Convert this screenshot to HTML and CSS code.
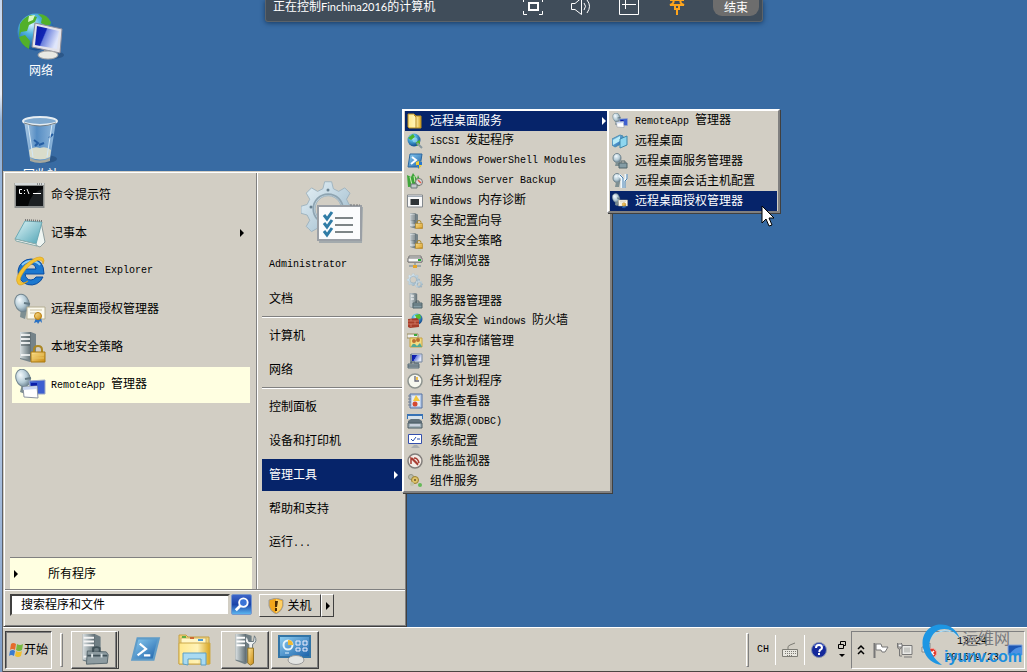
FILE: index.html
```html
<!DOCTYPE html>
<html lang="zh-CN">
<head>
<meta charset="utf-8">
<title>远程桌面</title>
<link rel="stylesheet" href="styles.css">
</head>
<body>
<svg class="sprite" aria-hidden="true">
  <defs>
    <radialGradient id="gGlobe" cx=".38" cy=".3" r=".75"><stop offset="0" stop-color="#d5f3ff"/><stop offset=".35" stop-color="#4fb3e0"/><stop offset="1" stop-color="#0d3f86"/></radialGradient>
    <linearGradient id="gScreen" x1="0" y1="0" x2="1" y2=".4"><stop offset="0" stop-color="#0a18a8"/><stop offset=".45" stop-color="#1226b4"/><stop offset=".5" stop-color="#6b80dd"/><stop offset="1" stop-color="#dfe6fb"/></linearGradient>
    <radialGradient id="gDish" cx=".4" cy=".3" r=".7"><stop offset="0" stop-color="#f4fafd"/><stop offset=".6" stop-color="#b5cbd6"/><stop offset="1" stop-color="#6d8391"/></radialGradient>
    <linearGradient id="gSteel" x1="0" y1="0" x2="1" y2="0"><stop offset="0" stop-color="#d9dfe1"/><stop offset=".5" stop-color="#9aa6aa"/><stop offset="1" stop-color="#5f6c72"/></linearGradient>
    <linearGradient id="gGold" x1="0" y1="0" x2="1" y2="1"><stop offset="0" stop-color="#ffe596"/><stop offset="1" stop-color="#c98a12"/></linearGradient>
    <linearGradient id="gBlue" x1="0" y1="0" x2="1" y2="1"><stop offset="0" stop-color="#8fd0f3"/><stop offset="1" stop-color="#1a5fa8"/></linearGradient>
    <linearGradient id="gPad" x1="0" y1="0" x2="1" y2="1"><stop offset="0" stop-color="#dff5f7"/><stop offset="1" stop-color="#4fa3b5"/></linearGradient>
    <linearGradient id="gGear" x1="0" y1="0" x2="1" y2="1"><stop offset="0" stop-color="#e8f3f8"/><stop offset=".6" stop-color="#b3cbd9"/><stop offset="1" stop-color="#8299a8"/></linearGradient>
    <linearGradient id="gFolder" x1="0" y1="0" x2="1" y2="0"><stop offset="0" stop-color="#ffe88c"/><stop offset=".6" stop-color="#fff3b8"/><stop offset="1" stop-color="#d9a520"/></linearGradient>
    <linearGradient id="gGlass" x1="0" y1="0" x2="1" y2="0"><stop offset="0" stop-color="#c3dcf0"/><stop offset=".4" stop-color="#5b93c9"/><stop offset="1" stop-color="#a5c9e8"/></linearGradient>
  </defs>

  <symbol id="i-network" viewBox="0 0 48 48">
    <ellipse cx="34" cy="43" rx="13" ry="4" fill="#1d4470" opacity=".5"/>
    <circle cx="19" cy="20" r="18.500" fill="url(#gGlobe)"/>
    <path d="M3 12Q7 5 14 3l6 2-2 5-6 3-2 6-6 1-2 5zM21 2q10 0 13 9l-4 3-6-3 1-5zM2 25l6-2 5 6-1 8Q4 33 2 25zM27 3l7 7-1 3-7-2z" fill="#52b02a"/>
    <path d="M12 4l6-1-2 5-5 2z" fill="#d9f8c5"/>
    <path d="M18 11l27 6-2 24-28-6z" fill="#e3e3ea" stroke="#8d8d99"/>
    <path d="M20 14l22 5-2 18-22-4z" fill="url(#gScreen)"/>
    <path d="M27 38l6 1v3l-7-1z" fill="#9d9da2"/>
    <ellipse cx="31" cy="43" rx="10" ry="4" fill="#e9e9e4" stroke="#a9a9a9"/>
  </symbol>
  <symbol id="i-bin" viewBox="0 0 40 48">
    <ellipse cx="24" cy="43" rx="12" ry="4" fill="#1d4470" opacity=".5"/>
    <path d="M3 5l6 38q10 5 20 0l6-38z" fill="url(#gGlass)" opacity=".85"/>
    <path d="M8 34l1 7q10 5 20 0l1-7q-5-4-11-2-6-2-11 2z" fill="#d9dccb"/>
    <path d="M9 42q10 5 20 0v3q-10 4-20 0z" fill="#a5a89e"/>
    <path d="M13 24l4 3-3 3M18 29l5-2M28 22l4-4" stroke="#255ea3" stroke-width="2" fill="none"/>
    <path d="M7 8l5 33M31 8l-5 33" stroke="#d3e8f7" stroke-width="1"/>
    <ellipse cx="19" cy="5" rx="17" ry="4" fill="#7fa9cf" stroke="#e6edf2" stroke-width="2"/>
    <path d="M3 7q16 6 32 0" fill="none" stroke="#737f87"/>
  </symbol>
  <symbol id="i-cmd" viewBox="0 0 32 32">
    <rect x=".5" y="4" width="30" height="25" fill="#8a8d8c"/><path d="M1 4h29v2H1z" fill="#d5d9da"/><path d="M23 5h1m1 0h1m1 0h1" stroke="#444"/>
    <path d="M2 7h27v20H2z" fill="#050607"/><path d="M14 27Q17 13 29 10v17z" fill="#1c2023"/>
    <path d="M8 10.500H5.500v4H8M10 11.500h1m-1 3h1M13 10l2 5M19 14.500h8" fill="none" stroke="#fff" stroke-width="1"/>
  </symbol>
  <symbol id="i-notepad" viewBox="0 0 32 32">
    <path d="M27 5l4 20-5 5-5-2z" fill="#eff5f2" stroke="#8e9e9f"/><path d="M11 4l17 1-6 22L1 22z" fill="url(#gPad)" stroke="#6caab5"/>
    <path d="M1 22l21 5 1 2-21-5z" fill="#f4f7f5" stroke="#8aa"/><path d="M11 3l17 1" stroke="#777" stroke-width="2" stroke-dasharray="1 1"/>
  </symbol>
  <symbol id="i-ie" viewBox="0 0 32 32">
    <path fill-rule="evenodd" d="M17 4a13 13 0 1 0 12 18h-7q-2 3-5 3-5 0-6-6h19Q30 4 17 4zM11 14q1-5 6-5 4 0 5 5z" fill="#1c78cf" stroke="#0b4da0"/>
    <path d="M8 10q4-4 9-4 6 0 9 4" fill="none" stroke="#8ccbf5" stroke-width="2"/>
    <path d="M4 29Q-1 23 11 10 24-1 29 3q2 2 0 6 0-4-3-4-5 0-14 9-8 10-5 13 2 2 7-1Q7 32 4 29z" fill="#f3c334" stroke="#d99c16" stroke-width=".6"/>
  </symbol>
  <symbol id="i-cert" viewBox="0 0 32 32">
    <path d="M7 16l-1 8 5 2 2-9z" fill="#7e8f92"/><ellipse cx="8" cy="10" rx="7" ry="9" transform="rotate(-18 8 10)" fill="url(#gDish)" stroke="#71858f"/>
    <path d="M10 10l6 1" stroke="#647984" stroke-width="2"/><path d="M13 14h18v12H13z" fill="#fbf9ed" stroke="#b5ae92"/><path d="M16 17h12M16 20h9" stroke="#c9c1a5"/>
    <path d="M22 25l-2 5 3-1 1 2 2-3 2 2-1-6z" fill="#2870c4"/><circle cx="24" cy="23" r="3.500" fill="url(#gGold)" stroke="#bb8013"/>
  </symbol>
  <symbol id="i-lock" viewBox="0 0 32 32">
    <path d="M6 1h11l5 2v24l-6 4-10-3z" fill="#758389"/><path d="M6 1h11v28l-11-2z" fill="url(#gSteel)"/><path d="M7 4h9M7 8h9M7 12h9M7 24h9" stroke="#fff" stroke-width="1.500"/><path d="M7 6h9M7 10h9M7 14h9" stroke="#4b565b"/>
    <path d="M20 21v-2q0-4 4-4t4 4v3" fill="none" stroke="#ab8623" stroke-width="2"/><path d="M17 21h14v10H17z" fill="url(#gGold)" stroke="#a97a12"/><path d="M18 24h12m-12 3h12" stroke="#eac760"/>
  </symbol>
  <symbol id="i-remote" viewBox="0 0 32 32">
    <path d="M8 15l-2 8 5 2 2-8z" fill="#7e8f92"/><ellipse cx="9" cy="9" rx="7" ry="9" transform="rotate(-20 9 9)" fill="url(#gDish)" stroke="#71858f"/><path d="M11 10l6-1" stroke="#647984" stroke-width="2"/>
    <path d="M15 12l16-1v14H17z" fill="#3d5fd0" stroke="#9daac8"/><path d="M17 14h6v5h-6z" fill="#0a1da8"/><path d="M9 18l14-1 1 12-14-1z" fill="#fff" stroke="#8b93a0"/><path d="M9 18l14-1v3l-14 1z" fill="#c7d5ef"/>
  </symbol>

  <symbol id="gear" viewBox="0 0 64 64"><path fill-rule="evenodd" d="M27 2h8l2 8 6 3 7-4 6 6-4 7 3 6 8 2v8l-8 2-3 6 4 7-6 6-7-4-6 3-2 7h-8l-2-7-6-3-7 4-6-6 4-7-3-6-7-2v-8l7-2 3-6-4-7 6-6 7 4 6-3zM31 18a15 15 0 1 0 .1 0z" fill="url(#gGear)" stroke="#9ab0bd"/><circle cx="31" cy="33" r="17" fill="none" stroke="#8ea4b1" stroke-width="2"/></symbol>
  <symbol id="i-admin" viewBox="0 0 64 72">
    <use href="#gear" x="1" y="2" width="56" height="60"/><circle cx="28" cy="14" r="1.500" fill="#68808f"/><circle cx="11" cy="31" r="1.500" fill="#68808f"/>
    <path d="M20 30l43 1-1 36H19z" fill="#83939f" opacity=".6"/><path d="M18 30h43v34H18z" fill="#fbfcfd" stroke="#9a9fa5" stroke-width="2"/><path d="M50 29h10" stroke="#777" stroke-dasharray="2 1"/>
    <path d="M24 39l3 4 5-7M24 47l3 4 5-7M24 55l3 4 5-7" fill="none" stroke="#2f7ca6" stroke-width="3"/><path d="M35 42h18M35 49h18M35 56h18" stroke="#7d8587" stroke-width="2"/>
  </symbol>

  <symbol id="s-folder" viewBox="0 0 16 16"><path d="M1 1h6l2 2h5v12H2L1 14z" fill="url(#gFolder)" stroke="#b98e20"/><path d="M7 2l2 2v11" stroke="#b98b1f" fill="none"/></symbol>
  <symbol id="s-iscsi" viewBox="0 0 16 16"><circle cx="7" cy="7" r="6.500" fill="url(#gGlobe)"/><path d="M1 5l5-4 2 3-4 3zM9 9l4-2v4l-3 2z" fill="#4ab52a"/><circle cx="8" cy="7" r="2.500" fill="#9bdcf5" opacity=".7"/><path d="M10 10l5 5" stroke="#8a98a0" stroke-width="2"/></symbol>
  <symbol id="s-ps" viewBox="0 0 16 16"><path d="M3 1h12l-2 13H1z" fill="url(#gBlue)" stroke="#2b669f"/><path d="M5 4l4 3-5 4" fill="none" stroke="#fff" stroke-width="2"/><path d="M9 9l3-1 3 1v3l-3 4-3-4z" fill="#f3cf38"/><path d="M12 8l3 1v3h-3zM9 12h3v4z" fill="#2877cf"/></symbol>
  <symbol id="s-backup" viewBox="0 0 16 16"><path d="M1 14L0 2l4 2 2-4 4 6 1-4 2 5v6z" fill="#3fa53a"/><path d="M3 4l2 8M7 3l1 6" stroke="#cff0bb"/><circle cx="12" cy="9" r="3.500" fill="#ddd" stroke="#777"/><path d="M11 7l3 3" stroke="#e4604a" stroke-width="1.500"/><path d="M4 11h6v4H4z" fill="#c4cacb" stroke="#6c787a"/></symbol>
  <symbol id="s-mem" viewBox="0 0 16 16"><path d="M.5 2h15v12H.5z" fill="#f9f9f9" stroke="#83888d"/><path d="M1 3h14v1H1z" fill="#a4afb9"/><path d="M4 6h8v6H4z" fill="#2e3538"/><path d="M3 7h10M3 9h10M3 11h10" stroke="#333" stroke-dasharray="1 1"/></symbol>
  <symbol id="s-storage" viewBox="0 0 16 16"><path d="M2 3h12l1 6H1z" fill="#ddd" stroke="#777"/><path d="M1 5h14v4H1z" fill="#f7f7f7" stroke="#777"/><path d="M11 7h3" stroke="#26a533" stroke-width="2"/><path d="M2 13h12M8 10v3" stroke="#6b8190"/><path d="M6 12h4v3H6z" fill="#e3a52c"/></symbol>
  <symbol id="s-gears" viewBox="0 0 16 16"><use href="#gear" x="0" y="0" width="13" height="13"/><use href="#gear" x="8" y="7" width="8" height="8"/></symbol>
  <symbol id="s-server" viewBox="0 0 16 16"><path d="M3 0h5l2 1v12l-3 2-4-1z" fill="url(#gSteel)" stroke="#7e8b90" stroke-width=".5"/><path d="M4 3h3M4 6h3" stroke="#fff"/><path d="M6 10h9v5H6z" fill="#849ca5" stroke="#51646b"/><path d="M9 10V8h3v2M6 12h9" fill="none" stroke="#52656b"/></symbol>
  <symbol id="s-wall" viewBox="0 0 16 16"><circle cx="10" cy="6" r="5.500" fill="url(#gGlobe)"/><path d="M8 2l5-1 1 4-4 2z" fill="#59bd2c"/><path d="M1 6l9-1 2 2v7l-9 1-2-1z" fill="#a63d2a"/><path d="M1 8h11M1 11h11M4 6v2m4 0v3m-4 0v3" stroke="#dd8b73" stroke-width=".7"/></symbol>
  <symbol id="s-share" viewBox="0 0 16 16"><path d="M0 1h11v4H0z" fill="#eee" stroke="#9a8d60"/><path d="M3 5h12v9H3z" fill="#f4dc82" stroke="#c7a341"/><path d="M7 2h3" stroke="#3aa83d" stroke-width="2"/><circle cx="7" cy="8" r="2" fill="#b97132"/><circle cx="11" cy="7" r="2" fill="#b97132"/><path d="M4 14q2-6 6-1l3-3 2 4z" fill="#51a896"/></symbol>
  <symbol id="s-computer" viewBox="0 0 16 16"><path d="M4 1h11v8H4z" fill="#d7e2ee" stroke="#7786a1"/><path d="M5 2h9v6H5z" fill="url(#gScreen)"/><path d="M9 9h3v2H9zM3 1h2v9H3z" fill="#788692"/><path d="M1 11h11v4H1z" fill="#a0adb4" stroke="#596c77"/><path d="M4 11V9h4v2M1 13h11" fill="none" stroke="#4e5e68"/></symbol>
  <symbol id="s-clock" viewBox="0 0 16 16"><circle cx="8" cy="8" r="7" fill="#f7f8ef" stroke="#8d938f" stroke-width="1.500"/><path d="M8 3v5h4" fill="none" stroke="#667" stroke-width="1.300"/><path d="M9 4h2v3H9z" fill="#efbf4c"/></symbol>
  <symbol id="s-event" viewBox="0 0 16 16"><path d="M3 1h12v14H3z" fill="#b7cbe8" stroke="#5571a0"/><path d="M5 3h8v10H5z" fill="#e5ebf3"/><path d="M1 3h3M1 6h3M1 9h3M1 12h3" stroke="#6e7d91"/><path d="M9 2l4 6H6z" fill="#f4c83b"/><circle cx="8" cy="11" r="2.500" fill="#d54831"/></symbol>
  <symbol id="s-odbc" viewBox="0 0 16 16"><path d="M0 1h16v5H0z" fill="#3772b5"/><path d="M1 3h14v3H1z" fill="#d7e2eb"/><path d="M1 8l3-2h8l3 2v2H1z" fill="#61717b"/><path d="M1 10h14v5H1z" fill="#a4b3ba" stroke="#4a5b65"/><path d="M3 12h10" stroke="#eef"/></symbol>
  <symbol id="s-config" viewBox="0 0 16 16"><path d="M1.500 1.500h13v9h-13z" fill="#fff" stroke="#344fac"/><path d="M4 6l2 2 3-4M10 6h3" fill="none" stroke="#254dab"/><path d="M7 12h3l3 3H4z" fill="#aaaeb1"/></symbol>
  <symbol id="s-perf" viewBox="0 0 16 16"><circle cx="8" cy="8" r="7" fill="#f3ebe5" stroke="#827e7b" stroke-width="1.500"/><path d="M4 11V5l7 7M7 5q4 0 5 5M5 5l6 6" fill="none" stroke="#a83c32" stroke-width="1.500"/></symbol>
  <symbol id="s-comp" viewBox="0 0 16 16"><circle cx="4" cy="4" r="2.500" fill="#babdb0" stroke="#929384"/><circle cx="8" cy="7" r="3.500" fill="#e0c36a" stroke="#998131"/><circle cx="5" cy="11" r="2" fill="#c1c4ac"/><circle cx="13" cy="12" r="2" fill="#64b957"/><circle cx="8" cy="7" r="1" fill="#64542b"/></symbol>
  <symbol id="s-rdp" viewBox="0 0 16 16"><path d="M0 6l8-4 3 1v7l-8 4-3-2z" fill="url(#gBlue)" stroke="#4d8eb0"/><path d="M1 7l7-4v5l-7 4z" fill="#b9ecf8"/><path d="M8 6l7-3v9l-7 3z" fill="#8ed6ef" stroke="#3f87a9"/></symbol>
  <symbol id="s-rdsvc" viewBox="0 0 16 16"><ellipse cx="5" cy="5" rx="4" ry="4.500" fill="url(#gDish)" stroke="#71858f"/><path d="M4 9l-1 4h4l1-4z" fill="#7e8f92"/><path d="M7 10h8v5H7z" fill="#849ca5" stroke="#51646b"/><path d="M9 10V8h4v2" fill="none" stroke="#52656b"/></symbol>
  <symbol id="s-rdcfg" viewBox="0 0 16 16"><ellipse cx="5" cy="5" rx="4" ry="4.500" fill="url(#gDish)" stroke="#71858f"/><path d="M4 9l-1 5h4l1-5z" fill="#7e8f92"/><path d="M7 2l3 3v10M14 1v5l-2 2v7" stroke="#edf7fd" stroke-width="3" fill="none"/><path d="M8 2l3 3v10M15 1v5l-2 2v7" stroke="#487caa" fill="none"/></symbol>

  <symbol id="t-flag" viewBox="0 0 16 16"><path d="M2 8l1-6q2-2 5 0L7 8Q4 6 2 8z" fill="#e66b2b"/><path d="M9 2q3 2 6 0l-1 6q-3 2-6 0z" fill="#76b83d"/><path d="M2 9q3-2 5 0l-1 5q-3-2-5 0z" fill="#397bd0"/><path d="M8 9q3 2 6 0l-1 5q-3 2-6 0z" fill="#f0bf2f"/></symbol>
  <symbol id="t-server" viewBox="0 0 32 36"><path d="M4 1h13l6 3v24l-7 5-12-4z" fill="#6f7e84"/><path d="M4 1h13v30L4 28z" fill="url(#gSteel)"/><path d="M5 5h11M5 9h11M5 13h11M5 25h11" stroke="#f4f4f4" stroke-width="2"/><path d="M9 19l20 1 2 3-1 9-22 1z" fill="#8d9ba0" stroke="#56666c"/><path d="M15 20v-4q4-2 7 0v4M9 24h21" fill="none" stroke="#405158" stroke-width="2"/><path d="M14 22v4m10-4v4" stroke="#dce3e5" stroke-width="2"/></symbol>
  <symbol id="t-ps" viewBox="0 0 32 28"><path d="M9 3h20l-5 20H4z" fill="url(#gBlue)" stroke="#5f9cc8" stroke-width="2"/><path d="M11 8l6 5-8 6M15 19h6" fill="none" stroke="#fff" stroke-width="2"/></symbol>
  <symbol id="t-folder" viewBox="0 0 34 34"><path d="M1 2h7l2 2h21v27H1z" fill="#f0d376" stroke="#c5a044"/><path d="M3 5h25v11H3z" fill="#fff6c7" stroke="#d1b566"/><path d="M4 4h4" stroke="#60ae46" stroke-width="2"/><path d="M12 5h4" stroke="#cf6a34" stroke-width="2"/><path d="M20 7h5" stroke="#4d9bd6" stroke-width="2"/><path d="M1 10h31v21H1z" fill="url(#gFolder)" stroke="#cca94b"/><path d="M5 31V20h23v12h-5v-6H10v6z" fill="#a9daf1" stroke="#5c9fc5"/></symbol>
  <symbol id="t-tools" viewBox="0 0 32 36"><path d="M6 1h11l6 2v26l-7 4-10-4z" fill="#6f7e84"/><path d="M6 1h11v30L6 28z" fill="url(#gSteel)"/><path d="M7 5h9M7 9h9M7 13h9" stroke="#fff" stroke-width="2"/><path d="M18 3q-4 7 2 9v5h4v-5q6-3 2-9l-1 6h-5z" fill="#eef1f1" stroke="#66757c"/><path d="M19 16h6v16l-3 2-3-2z" fill="url(#gGold)" stroke="#8f7020"/></symbol>
  <symbol id="t-panel" viewBox="0 0 34 30"><path d="M1 1h31v21H1z" fill="url(#gBlue)" stroke="#3274a6" stroke-width="2"/><circle cx="10" cy="10" r="4.500" fill="none" stroke="#e6f4fa" stroke-width="2"/><path d="M10 10V5q5 0 5 5z" fill="#efb833"/><path d="M18 6h4v4h-4zm7 0h4v4h-4zm-7 7h4v3h-4zm7 0h4v3h-4z" fill="none" stroke="#eef"/><path d="M7 18h4" stroke="#e2f4ff"/><ellipse cx="18" cy="25" rx="8" ry="4.500" fill="#e3e4e2" stroke="#999"/></symbol>
</svg>

<div class="viewport">
  <div class="host-edge"></div>
  <div class="screen">
    <main class="desktop">
      <div class="shortcuts">
        <a class="shortcut" href="#network"><svg class="shortcut-icon"><use href="#i-network"/></svg><span>网络</span></a>
        <a class="shortcut" href="#bin"><svg class="shortcut-icon"><use href="#i-bin"/></svg><span>回收站</span></a>
      </div>

      <header class="session">
        <span class="session-title">正在控制<span class="session-host">Finchina2016</span>的计算机</span>
        <div class="session-tools">
          <button class="tool" aria-label="全屏"><svg viewBox="0 0 20 20"><path d="M4 1.500H.5V5M16 1.500h3.500V5M.5 14v3.500H4M16 17.500h3.500V14" fill="none" stroke="#fff"/><path d="M6 6h9v7H6z" fill="none" stroke="#fff" stroke-width="2"/></svg></button>
          <button class="tool" aria-label="声音"><svg viewBox="0 0 20 20"><path d="M.5 6.500H4L10.500 1v16.500L4 12.500H.5z" fill="none" stroke="#fff"/><path d="M13 6q3 3 0 7M16 3q5 6 0 13" fill="none" stroke="#fff"/></svg></button>
          <button class="tool" aria-label="最小化"><svg viewBox="0 0 20 20"><path d="M.5 0v17.500h19V0M6.500 3v9M3 7.500h14" fill="none" stroke="#fff"/></svg></button>
          <button class="tool" aria-label="固定"><svg viewBox="0 0 20 20"><path d="M3 3h14M6 3q2 3-3 5h14q-5-2-3-5M8 8v4h4V8M10 12v6" fill="none" stroke="#ffa51c" stroke-width="2"/></svg></button>
        </div>
        <button class="end">结束</button>
      </header>

      <section class="start-menu" aria-label="开始菜单">
        <div class="start-body">
          <div class="programs">
            <ul class="recent">
              <li><button class="program"><svg><use href="#i-cmd"/></svg><span>命令提示符</span></button></li>
              <li><button class="program"><svg><use href="#i-notepad"/></svg><span>记事本</span><i class="arrow"></i></button></li>
              <li><button class="program"><svg><use href="#i-ie"/></svg><span class="en">Internet Explorer</span></button></li>
              <li><button class="program"><svg><use href="#i-cert"/></svg><span>远程桌面授权管理器</span></button></li>
              <li><button class="program"><svg><use href="#i-lock"/></svg><span>本地安全策略</span></button></li>
              <li><button class="program is-new"><svg><use href="#i-remote"/></svg><span><span class="en">RemoteApp </span>管理器</span></button></li>
            </ul>
            <button class="all-programs"><i class="arrow"></i><span>所有程序</span></button>
          </div>
          <div class="places">
            <svg class="places-picture"><use href="#i-admin"/></svg>
            <ul>
              <li class="slot"><button class="place en">Administrator</button></li>
              <li class="slot"><button class="place">文档</button></li>
              <li class="rule"></li>
              <li class="slot"><button class="place">计算机</button></li>
              <li class="slot"><button class="place">网络</button></li>
              <li class="rule"></li>
              <li class="slot"><button class="place">控制面板</button></li>
              <li class="slot"><button class="place">设备和打印机</button></li>
              <li class="slot has-menu">
                <button class="place is-active"><span>管理工具</span><i class="arrow"></i></button>
                <ul class="menu menu-tools">
                  <li class="has-menu">
                    <button class="entry is-active"><svg><use href="#s-folder"/></svg><span>远程桌面服务</span><i class="arrow"></i></button>
                    <ul class="menu menu-remote">
                      <li><button class="entry"><svg><use href="#i-remote"/></svg><span><span class="en">RemoteApp </span>管理器</span></button></li>
                      <li><button class="entry"><svg><use href="#s-rdp"/></svg><span>远程桌面</span></button></li>
                      <li><button class="entry"><svg><use href="#s-rdsvc"/></svg><span>远程桌面服务管理器</span></button></li>
                      <li><button class="entry"><svg><use href="#s-rdcfg"/></svg><span>远程桌面会话主机配置</span></button></li>
                      <li class="has-menu"><button class="entry is-active"><svg><use href="#i-cert"/></svg><span>远程桌面授权管理器</span></button>
                        <svg class="cursor" viewBox="0 0 13 22"><path d="M1 1v17l4-4 3 7 3-1-3-7h5z" fill="#fff" stroke="#000"/></svg></li>
                    </ul>
                  </li>
                  <li><button class="entry"><svg><use href="#s-iscsi"/></svg><span><span class="en">iSCSI </span>发起程序</span></button></li>
                  <li><button class="entry"><svg><use href="#s-ps"/></svg><span class="en">Windows PowerShell Modules</span></button></li>
                  <li><button class="entry"><svg><use href="#s-backup"/></svg><span class="en">Windows Server Backup</span></button></li>
                  <li><button class="entry"><svg><use href="#s-mem"/></svg><span><span class="en">Windows </span>内存诊断</span></button></li>
                  <li><button class="entry"><svg><use href="#i-lock"/></svg><span>安全配置向导</span></button></li>
                  <li><button class="entry"><svg><use href="#i-lock"/></svg><span>本地安全策略</span></button></li>
                  <li><button class="entry"><svg><use href="#s-storage"/></svg><span>存储浏览器</span></button></li>
                  <li><button class="entry"><svg><use href="#s-gears"/></svg><span>服务</span></button></li>
                  <li><button class="entry"><svg><use href="#s-server"/></svg><span>服务器管理器</span></button></li>
                  <li><button class="entry"><svg><use href="#s-wall"/></svg><span>高级安全<span class="en"> Windows </span>防火墙</span></button></li>
                  <li><button class="entry"><svg><use href="#s-share"/></svg><span>共享和存储管理</span></button></li>
                  <li><button class="entry"><svg><use href="#s-computer"/></svg><span>计算机管理</span></button></li>
                  <li><button class="entry"><svg><use href="#s-clock"/></svg><span>任务计划程序</span></button></li>
                  <li><button class="entry"><svg><use href="#s-event"/></svg><span>事件查看器</span></button></li>
                  <li><button class="entry"><svg><use href="#s-odbc"/></svg><span>数据源<span class="en">(ODBC)</span></span></button></li>
                  <li><button class="entry"><svg><use href="#s-config"/></svg><span>系统配置</span></button></li>
                  <li><button class="entry"><svg><use href="#s-perf"/></svg><span>性能监视器</span></button></li>
                  <li><button class="entry"><svg><use href="#s-comp"/></svg><span>组件服务</span></button></li>
                </ul>
              </li>
              <li class="slot"><button class="place">帮助和支持</button></li>
              <li class="slot"><button class="place"><span>运行<span class="en">...</span></span></button></li>
            </ul>
          </div>
        </div>
        <div class="start-foot">
          <form class="search">
            <input type="text" aria-label="搜索程序和文件" placeholder="搜索程序和文件">
            <button type="button" class="search-go" aria-label="搜索"><svg viewBox="0 0 20 20"><path d="M9 11l-5 5" stroke="#fff" stroke-width="3"/><circle cx="12" cy="8" r="4.500" fill="#3b74d6" stroke="#fff" stroke-width="2"/></svg></button>
          </form>
          <div class="power">
            <button class="shutdown"><svg viewBox="0 0 16 16"><path d="M8 0l7 2v6q-1 5-7 8-6-3-7-8V2z" fill="#f3a61b" stroke="#9b9d9e"/><path d="M8 1l6 2v5q-1 4-6 7z" fill="#ffd064"/><path d="M7 3h3l-1 6H7zm0 7h2v3H7z" fill="#4b2b04"/></svg><span>关机</span></button>
            <button class="power-more" aria-label="更多"><i class="arrow"></i></button>
          </div>
        </div>
      </section>
    </main>

    <footer class="taskbar">
      <button class="start"><svg><use href="#t-flag"/></svg><span>开始</span></button>
      <i class="grip"></i>
      <div class="tasks">
        <button class="task is-open is-stacked" aria-label="服务器管理器"><svg><use href="#t-server"/></svg></button>
        <button class="task" aria-label="PowerShell"><svg><use href="#t-ps"/></svg></button>
        <button class="task" aria-label="资源管理器"><svg><use href="#t-folder"/></svg></button>
        <button class="task is-open" aria-label="工具"><svg><use href="#t-tools"/></svg></button>
        <button class="task is-open" aria-label="控制面板"><svg><use href="#t-panel"/></svg></button>
      </div>
      <div class="language">
        <i class="grip"></i>
        <span class="ime">CH</span>
        <i class="divider"></i>
        <svg class="lang-icon" viewBox="0 0 16 16"><path d="M.5 7.500h15v7H.5z" fill="#e8e6df" stroke="#7d7c75"/><path d="M3 9.500h11M3 11.500h11M5 13.500h6" stroke="#7d7c75" stroke-dasharray="1 1"/><path d="M6 7q-1-3 2-4l5-2" fill="none" stroke="#7d7c75"/></svg>
        <i class="divider"></i>
        <svg class="lang-icon" viewBox="0 0 16 16"><circle cx="8" cy="8" r="7.500" fill="#15299b" stroke="#8b96b0"/><path d="M3 4q5-4 10 0" stroke="#637bdc" fill="none"/><path d="M5 6q0-3 3-3t3 3q0 1-2 2l-1 2m0 1v2" fill="none" stroke="#fff" stroke-width="2"/></svg>
        <svg class="lang-options" viewBox="0 0 10 20"><path d="M3.500 5V1.500h5v4H6M1.500 4.500h5v4h-5z" fill="none" stroke="#000"/><path d="M2 14h6l-3 3z"/></svg>
      </div>
      <div class="notify">
        <svg class="chevrons" viewBox="0 0 8 12"><path d="M1 5l3-3 3 3M1 10l3-3 3 3" fill="none" stroke="#000" stroke-width="1.500"/></svg>
        <svg class="note-icon" viewBox="0 0 16 16"><path d="M1.500 1v15" stroke="#777" stroke-width="2"/><path d="M3 2h5l1 3h6l-3 5H9L8 8H3z" fill="#fff" stroke="#777"/></svg>
        <svg class="note-icon" viewBox="0 0 16 16"><path d="M5 3.500h10v9H5z" fill="#e9e9e6" stroke="#777"/><path d="M7 5.500h6v5H7z" fill="#c6c7c3"/><path d="M7 15h8M.5 1v4q0 2 2 2t2-2V1M2.500 7v7H5" fill="none" stroke="#777"/><path d="M1 2h4v3H1z" fill="#fff" stroke="#777"/></svg>
        <svg class="note-icon" viewBox="0 0 16 16"><path d="M1 5h3l5-4v13l-5-4H1z" fill="#eee" stroke="#888"/><circle cx="11" cy="11" r="4.500" fill="#df3427" stroke="#f4a49c"/><path d="M9 9l4 4m0-4l-4 4" stroke="#fff" stroke-width="1.500"/></svg>
        <div class="clock en"><span>13:24</span><span>2016/9/23</span></div>
        <svg class="show-desktop" viewBox="0 0 16 12"><path d="M1 1h14v10H1z" fill="#1e58b5" stroke="#86a8dc"/><path d="M2 11Q7 3 15 3v8z" fill="#4e91e3"/></svg>
        <div class="watermark">
          <svg viewBox="0 0 40 42"><path d="M38 15C34 3 24-1 14 1 3 4-1 14 1 24 4 35 11 40 20 41 9 33 5 22 9 14 14 3 29 1 38 15z" fill="#1d96e3"/><path d="M36 13C28 2 12 5 8 18 11 8 26 3 36 13z" fill="#a6dcfa"/></svg>
          <div class="mark-text"><span class="mark-name">运维网</span><span class="mark-url">iyunv.com</span></div>
        </div>
      </div>
    </footer>
  </div>
</div>
</body>
</html>
```
FILE: styles.css
```css
:root {
  --face: #d2cec4;
  --light: #ffffff;
  --shade: #808080;
  --dark: #404040;
  --select: #06246a;
  --tip: #ffffe1;
}

* { box-sizing: border-box; }

body {
  margin: 0;
  font: 12px/16px "Liberation Sans", "Noto Sans CJK SC", sans-serif;
  color: #000;
  overflow: hidden;
}

button, input { font: inherit; color: inherit; }

button {
  margin: 0;
  padding: 0;
  border: 0;
  background: none;
  text-align: left;
  white-space: nowrap;
}

ul { margin: 0; padding: 0; list-style: none; }
svg { display: block; flex: none; }
.sprite { position: absolute; width: 0; height: 0; }

.en {
  font-family: "Liberation Mono", monospace;
  font-size: 10px;
  white-space: pre;
}

.viewport { display: flex; height: 100vh; }

.host-edge {
  width: 3px;
  background: linear-gradient(#c3d5ee, #e8eef8 14%, #8fb0d8 18%, #b7cbe6 60%, #7d9cc6);
  border-right: 1px solid #5c5f66;
}

.screen { flex: 1; display: flex; flex-direction: column; min-width: 0; }
.desktop { flex: 1; position: relative; min-height: 0; background: #386ba3; }

/* desktop shortcuts */
.shortcuts {
  display: flex;
  flex-direction: column;
  align-items: flex-start;
  gap: 37px;
  padding: 12px 0 0 14px;
}

.shortcut {
  display: flex;
  flex-direction: column;
  align-items: center;
  gap: 3px;
  width: 48px;
  color: #fff;
  text-decoration: none;
}

.shortcut-icon { width: 48px; height: 48px; }

/* remote session bar */
.session {
  position: absolute;
  top: 0;
  left: 262px;
  display: flex;
  align-items: flex-start;
  width: 498px;
  height: 22px;
  padding: 0 3px 0 7px;
  background: #404d5a;
  border: 1px solid #5b6269;
  border-top: 0;
  border-radius: 0 0 3px 3px;
  box-shadow: 0 1px 5px #173a60;
  color: #fff;
}

.session-title { flex: 1; line-height: 14px; }
.session-host { font-family: Lato, sans-serif; font-size: 11px; }
.session-tools { display: flex; gap: 28px; margin-right: 26px; }
.tool svg { width: 20px; height: 20px; margin-top: -3px; }

.end {
  width: 46px;
  height: 16px;
  border-radius: 0 0 9px 9px;
  background: #6d6d6d;
  text-align: center;
  line-height: 13px;
}

/* start menu */
.start-menu {
  position: absolute;
  left: 0;
  bottom: 0;
  width: 404px;
  padding: 1px;
  background: var(--face);
  border: 1px solid;
  border-color: var(--face) var(--dark) var(--dark) var(--face);
  box-shadow: inset 1px 1px var(--light), inset -1px -1px var(--shade);
}

.start-body { display: flex; border-bottom: 1px solid var(--shade); }

.programs {
  flex: none;
  display: flex;
  flex-direction: column;
  justify-content: space-between;
  width: 252px;
  padding: 3px 4px 0 5px;
  border-right: 1px solid var(--shade);
}

.recent { display: grid; gap: 2px; padding: 1px 2px; }

.program {
  display: flex;
  align-items: center;
  gap: 5px;
  width: 100%;
  height: 36px;
  padding: 0 6px 0 2px;
}

.program svg { width: 32px; height: 32px; }
.program.is-new { background: var(--tip); }

.arrow {
  width: 0;
  height: 0;
  border: solid transparent;
  border-width: 4px 0 4px 4px;
  border-left-color: currentColor;
}

.program .arrow, .place .arrow, .entry .arrow { margin-left: auto; }

.all-programs {
  display: flex;
  align-items: center;
  gap: 30px;
  height: 32px;
  padding-left: 4px;
  background: var(--tip);
  border-top: 1px solid var(--shade);
}

.places {
  flex: 1;
  padding: 3px 3px 29px 4px;
  border-left: 1px solid var(--light);
}

.places-picture { width: 64px; height: 72px; margin: 0 auto; }

.slot { padding: 1px 0; }

.place {
  display: flex;
  align-items: center;
  width: 100%;
  height: 32px;
  padding: 0 4px 0 7px;
}

.place.is-active, .entry.is-active { background: var(--select); color: #fff; }

.rule {
  height: 2px;
  margin: 0 0 1px;
  border-top: 1px solid var(--shade);
  border-bottom: 1px solid var(--light);
}

.has-menu { position: relative; }

.menu {
  position: absolute;
  z-index: 2;
  padding: 0 1px;
  background: var(--face);
  border: 2px solid;
  border-color: var(--light) var(--shade) var(--shade) var(--light);
  box-shadow: 1px 1px var(--dark);
}

.menu-tools { left: 100%; bottom: -1px; width: 210px; }
.menu-remote { left: calc(100% - 2px); top: -2px; width: 173px; }

.entry {
  display: flex;
  align-items: center;
  gap: 7px;
  width: 100%;
  height: 20px;
  padding: 0 3px 0 2px;
}

.entry svg { width: 16px; height: 16px; }
.cursor { position: absolute; left: 151px; top: 14px; width: 13px; height: 22px; }

.start-foot {
  display: flex;
  gap: 7px;
  padding: 3px 0 8px 5px;
  border-top: 1px solid var(--light);
}

.search { display: flex; gap: 1px; width: 242px; }

.search input {
  flex: 1;
  min-width: 0;
  height: 22px;
  padding: 0 9px;
  background: #fff;
  border: 2px solid;
  border-color: var(--dark) var(--face) var(--face) var(--dark);
  border-radius: 0;
}

.search input::placeholder { color: #000; opacity: 1; }

.search-go {
  width: 21px;
  height: 21px;
  border: 1px solid #7796cc;
  border-radius: 2px;
  background: linear-gradient(#3d65c8, #1b44a8 50%, #5ab4ef);
}

.power { display: flex; }

.shutdown, .power-more {
  display: flex;
  align-items: center;
  justify-content: center;
  height: 23px;
  border: 1px solid;
  border-color: var(--light) var(--dark) var(--dark) var(--light);
}

.shutdown { gap: 3px; width: 62px; }
.shutdown svg { width: 16px; height: 16px; }
.power-more { width: 13px; }

/* taskbar */
.taskbar {
  display: flex;
  align-items: center;
  height: 45px;
  padding: 2px;
  background: var(--face);
  border-top: 1px solid var(--light);
  border-bottom: 1px solid #4c4642;
}

.start {
  display: flex;
  align-items: center;
  width: 47px;
  height: 38px;
  padding-left: 2px;
  border: 1px solid;
  border-color: var(--dark) var(--light) var(--light) var(--dark);
  box-shadow: inset 1px 1px var(--shade);
}

.start svg { width: 16px; height: 16px; }

.grip {
  width: 3px;
  height: 34px;
  margin: 0 8px;
  border: 1px solid;
  border-color: var(--light) var(--shade) var(--shade) var(--light);
}

.tasks { flex: 1; display: flex; gap: 2px; }

.task {
  display: flex;
  align-items: center;
  justify-content: center;
  width: 48px;
  height: 38px;
}

.task svg { width: 34px; height: 34px; }

.task.is-open {
  border: 1px solid;
  border-color: var(--light) var(--dark) var(--dark) var(--light);
  box-shadow: inset -1px -1px var(--shade);
}

.task.is-stacked { border-right-width: 3px; border-right-style: double; }

.language { display: flex; align-items: center; }
.ime { font: 10px/16px "Liberation Mono", monospace; }
.divider { width: 1px; height: 30px; margin: 0 6px; background: var(--light); }
.lang-icon { width: 16px; height: 16px; }
.lang-options { width: 10px; height: 20px; margin: 0 4px 0 10px; }

.notify {
  position: relative;
  display: flex;
  align-items: center;
  gap: 8px;
  width: 174px;
  height: 38px;
  padding: 0 2px 0 5px;
  border: 1px solid;
  border-color: var(--shade) var(--light) var(--light) var(--shade);
}

.chevrons { width: 8px; height: 12px; }
.note-icon { width: 16px; height: 16px; }

.clock {
  flex: 1;
  display: flex;
  flex-direction: column;
  align-items: center;
}

.show-desktop { width: 16px; height: 12px; }

.watermark {
  position: absolute;
  right: 0;
  top: -8px;
  display: flex;
  align-items: flex-start;
  width: 102px;
}

.watermark svg { width: 40px; height: 42px; }

.mark-text {
  display: flex;
  flex-direction: column;
  align-items: flex-end;
  margin-left: -18px;
  padding-top: 6px;
}

.mark-name { margin-right: 12px; font-size: 16px; line-height: 18px; color: #77787c; }
.mark-url { font-size: 16px; line-height: 18px; font-weight: bold; color: #1d8ede; }
```
